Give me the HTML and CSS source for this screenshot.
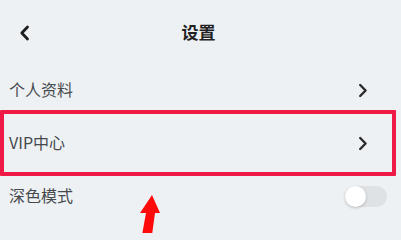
FILE: index.html
```html
<!DOCTYPE html>
<html lang="zh-CN">
<head>
<meta charset="utf-8">
<link rel="stylesheet" href="styles.css">
</head>
<body>
<div class="page">
  <header class="topbar">
    <span class="back">
      <svg width="11" height="16" viewBox="0 0 11 16"><path d="M8.5 2 L2.8 8 L8.5 14" fill="none" stroke="#1e1e1e" stroke-width="2.8" stroke-linecap="round" stroke-linejoin="round"/></svg>
    </span>
    <h1 class="title">设置</h1>
  </header>
  <div class="row">
    <span class="label">个人资料</span>
    <svg class="chev" width="10" height="15" viewBox="0 0 10 15"><path d="M2.2 2 L7.6 7.5 L2.2 13" fill="none" stroke="#2a2a2a" stroke-width="2.4" stroke-linecap="round" stroke-linejoin="round"/></svg>
  </div>
  <div class="row">
    <span class="label">VIP中心</span>
    <svg class="chev" width="10" height="15" viewBox="0 0 10 15"><path d="M2.2 2 L7.6 7.5 L2.2 13" fill="none" stroke="#2a2a2a" stroke-width="2.4" stroke-linecap="round" stroke-linejoin="round"/></svg>
  </div>
  <div class="row">
    <span class="label">深色模式</span>
    <span class="toggle"><span class="knob"></span></span>
  </div>
  <div class="highlight"></div>
  <svg class="arrow" width="30" height="40" viewBox="0 0 30 40"><polygon points="22,0 30,18 25,18 22,40 12,40 16,18 10,18" fill="#ff0a0a"/></svg>
</div>
</body>
</html>
```
FILE: styles.css
```css
html, body {
  margin: 0;
  padding: 0;
  background: #edf1f4;
}
.page {
  position: relative;
  width: 401px;
  height: 233px;
  overflow: hidden;
  font-family: "Noto Sans CJK SC", "Noto Sans", sans-serif;
}
.topbar {
  position: relative;
  height: 64px;
  display: flex;
  align-items: center;
  justify-content: center;
}
.back {
  position: absolute;
  left: 19px;
  top: 25px;
  display: flex;
}
.title {
  margin: -2px 4px 0 0;
  font-size: 17px;
  font-weight: 700;
  color: #222;
  line-height: 1;
}
.row {
  height: 53px;
  display: flex;
  align-items: center;
  justify-content: space-between;
  padding: 0 14px 0 9px;
}
.label {
  font-size: 16px;
  color: #474a4d;
  line-height: 1;
  margin-bottom: 3px;
}
.chev {
  margin-right: 19px;
}
.toggle {
  position: relative;
  width: 42px;
  height: 21px;
  border-radius: 11px;
  background: #dfe2e5;
  margin-top: -1px;
}
.knob {
  position: absolute;
  left: 0;
  top: 0;
  width: 21px;
  height: 21px;
  border-radius: 50%;
  background: #fff;
  box-shadow: 0 1px 3px rgba(0,0,0,0.22);
}
.highlight {
  position: absolute;
  left: 0;
  top: 110px;
  width: 396px;
  height: 66px;
  box-sizing: border-box;
  border: 4px solid #ee1a45;
  border-radius: 1px;
}
.arrow {
  position: absolute;
  left: 130px;
  top: 195px;
}
```
